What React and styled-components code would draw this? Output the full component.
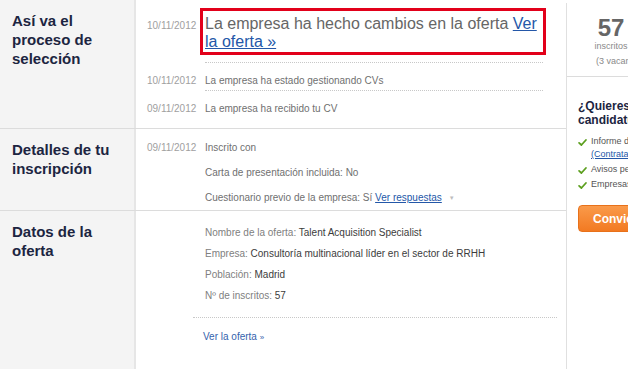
import React from "react";
import styled, { createGlobalStyle } from "styled-components";

const GlobalStyle = createGlobalStyle`
  body {
    margin: 0;
    background: #fff;
    font-family: "Liberation Sans", Arial, sans-serif;
    overflow: hidden;
  }
`;

export default function App() {
  const history = [
    { date: "10/11/2012", text: "La empresa ha estado gestionando CVs" },
    { date: "09/11/2012", text: "La empresa ha recibido tu CV" },
  ];

  const offer = [
    ["Nombre de la oferta:", "Talent Acquisition Specialist"],
    ["Empresa:", "Consultoría multinacional líder en el sector de RRHH"],
    ["Población:", "Madrid"],
    ["Nº de inscritos:", "57"],
  ];

  return (
    <Page>
      <GlobalStyle />
      <Main>
        <Section>
          <Label>Así va el proceso de selección</Label>
          <Content $top="8px" $bottom="10px">
            <Entry>
              <Date $offset="9px">10/11/2012</Date>
              <Highlight>
                La empresa ha hecho cambios en la oferta{" "}
                <UnderLink href="#">Ver la oferta »</UnderLink>
              </Highlight>
            </Entry>
            {history.map((item, idx) => (
              <Entry key={idx}>
                <Date $offset="10px">{item.date}</Date>
                <Body $divided>{item.text}</Body>
              </Entry>
            ))}
          </Content>
        </Section>

        <Section>
          <Label>Detalles de tu inscripción</Label>
          <Content $top="10px" $bottom="3px">
            <DetailList>
              <Entry>
                <Date>09/11/2012</Date>
                <Body>Inscrito con</Body>
              </Entry>
              <Entry>
                <Date />
                <Body>Carta de presentación incluida: No</Body>
              </Entry>
              <Entry>
                <Date />
                <Body>
                  Cuestionario previo de la empresa: Sí{" "}
                  <UnderLink href="#">Ver respuestas</UnderLink>
                  <Caret>▼</Caret>
                </Body>
              </Entry>
            </DetailList>
          </Content>
        </Section>

        <Section $last>
          <Label>Datos de la oferta</Label>
          <Content $top="14px" $bottom="40px">
            <DataList>
              {offer.map(([key, value], idx) => (
                <DataRow key={idx}>
                  {key} <strong>{value}</strong>
                </DataRow>
              ))}
            </DataList>
            <Divider />
            <PlainLink href="#">
              Ver la oferta <small>»</small>
            </PlainLink>
          </Content>
        </Section>
      </Main>

      <Aside>
        <Stats>
          <StatNumber>57</StatNumber>
          <StatText>inscritos</StatText>
          <StatText $gap="3px" $indent="29px">(3 vacantes)</StatText>
        </Stats>
        <Promo>
          <PromoTitle>¿Quieres destacar tu candidatura?</PromoTitle>
          <Checklist>
            <li>
              <Check />
              <span>
                Informe de
                <br />
                <UnderLink href="#">(Contratar)</UnderLink>
              </span>
            </li>
            <li>
              <Check />
              <span>Avisos personalizados</span>
            </li>
            <li>
              <Check />
              <span>Empresas que te ven</span>
            </li>
          </Checklist>
          <OrangeButton>Conviértete en Premium</OrangeButton>
        </Promo>
      </Aside>
    </Page>
  );
}

function Check() {
  return (
    <CheckIcon viewBox="0 0 10 10" aria-hidden="true">
      <path d="M1.2 5.4 L3.8 7.8 L8.8 2.2" fill="none" stroke="#5c9f1f" strokeWidth="2" strokeLinecap="round" strokeLinejoin="round" />
    </CheckIcon>
  );
}

const Page = styled.div`
  display: flex;
  width: 640px;
  height: 369px;
  overflow: hidden;
`;

const Main = styled.div`
  display: flex;
  flex-direction: column;
  flex: 0 0 566px;
`;

const Section = styled.section`
  display: grid;
  grid-template-columns: 136px 1fr;
  border-bottom: ${(props) => (props.$last ? "none" : "1px solid #dcdcdc")};
  flex: ${(props) => (props.$last ? "1" : "none")};
`;

const Label = styled.h2`
  margin: 0;
  padding: 11px 14px 0 12px;
  background: #f4f4f4;
  border-right: 2px solid #e6e6e6;
  font-size: 15px;
  line-height: 19px;
  font-weight: bold;
  color: #1c2541;
`;

const Content = styled.div`
  padding: ${(props) => props.$top} 23px ${(props) => props.$bottom} 11px;
  display: flex;
  flex-direction: column;
`;

const Entry = styled.div`
  display: grid;
  grid-template-columns: 58px 1fr;
  font-size: 10px;
  line-height: 17px;
`;

const Date = styled.span`
  color: #a0a0a0;
  padding-top: ${(props) => props.$offset || "0"};
`;

const Body = styled.span`
  color: #707070;
  border-top: ${(props) => (props.$divided ? "1px dotted #c8c8c8" : "none")};
  padding: ${(props) => (props.$divided ? "9px 0 1px" : "0")};
`;

const Highlight = styled.div`
  margin: 0 -3px 7px -5px;
  padding: 4px 4px 1px 2px;
  border: 3px solid #e2001a;
  font-size: 16px;
  line-height: 18px;
  color: #666;
`;

const UnderLink = styled.a`
  color: #2457a8;
  text-decoration: underline;
`;

const Caret = styled.span`
  margin-left: 7px;
  font-size: 6px;
  color: #bdbdbd;
  vertical-align: 1px;
`;

const DetailList = styled.div`
  display: flex;
  flex-direction: column;
  gap: 8px;
`;

const DataList = styled.ul`
  list-style: none;
  margin: 0 0 0 58px;
  padding: 0;
  display: flex;
  flex-direction: column;
  gap: 6px;
`;

const DataRow = styled.li`
  font-size: 10px;
  line-height: 15px;
  color: #808080;

  strong {
    font-weight: normal;
    color: #3c3c3c;
  }
`;

const Divider = styled.hr`
  margin: 14px -14px 0 46px;
  border: 0;
  border-top: 1px dotted #c8c8c8;
`;

const PlainLink = styled.a`
  margin: 11px 0 0 56px;
  font-size: 10px;
  line-height: 15px;
  color: #3563ad;
  text-decoration: none;

  small {
    font-size: 8px;
  }
`;

const Aside = styled.aside`
  flex: 0 0 61px;
  margin-top: 3px;
  border-left: 1px solid #e0e0e0;
  overflow: hidden;
`;

const Stats = styled.div`
  width: 88px;
  height: 74px;
  padding-top: 13px;
  box-sizing: border-box;
  border-bottom: 1px solid #dcdcdc;
  text-align: center;
  color: #8a8a8a;
`;

const StatNumber = styled.div`
  font-size: 24px;
  line-height: 24px;
  font-weight: bold;
  color: #666;
`;

const StatText = styled.div`
  margin-top: ${(props) => props.$gap || "0"};
  padding-left: ${(props) => props.$indent || "0"};
  text-align: ${(props) => (props.$indent ? "left" : "center")};
  white-space: nowrap;
  font-size: 9px;
  line-height: 12px;
`;

const Promo = styled.div`
  width: 140px;
  padding: 22px 0 0 11px;
`;

const PromoTitle = styled.h3`
  margin: 0;
  width: 120px;
  font-size: 12px;
  line-height: 14px;
  font-weight: bold;
  color: #1c2541;
`;

const Checklist = styled.ul`
  list-style: none;
  margin: 8px 0 0;
  padding: 0;
  display: flex;
  flex-direction: column;
  gap: 2px;

  li {
    display: flex;
    gap: 4px;
    font-size: 9px;
    line-height: 13px;
    color: #555;
    white-space: nowrap;
  }
`;

const CheckIcon = styled.svg`
  flex: none;
  width: 9px;
  height: 9px;
  margin-top: 3px;
`;

const OrangeButton = styled.button`
  margin-top: 14px;
  height: 27px;
  width: 130px;
  padding: 0 0 0 14px;
  text-align: left;
  white-space: nowrap;
  border: 1px solid #e8711a;
  border-radius: 4px;
  background: linear-gradient(#fa9a4a, #f27a22);
  color: #fff;
  font-family: inherit;
  font-size: 12px;
  font-weight: bold;
`;
